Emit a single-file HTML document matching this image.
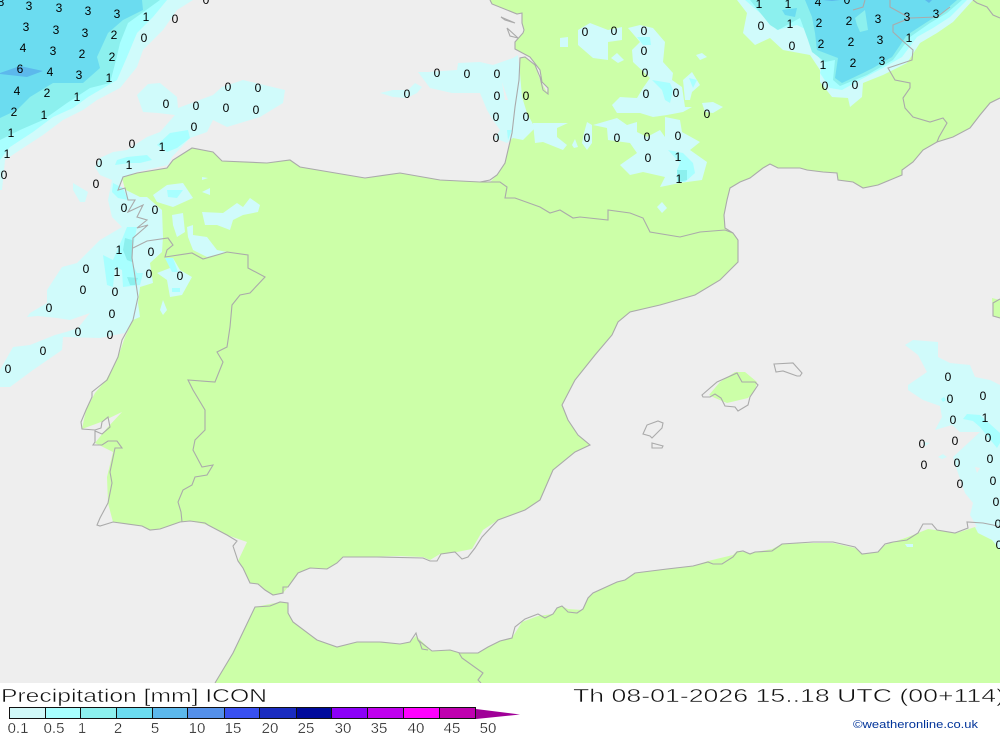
<!DOCTYPE html>
<html><head><meta charset="utf-8"><title>Precipitation ICON</title>
<style>
html,body{margin:0;padding:0;background:#fff;width:1000px;height:733px;overflow:hidden}
svg{display:block}
.l{fill:#ccffa8}
.a{fill:#d0fbfb}.b{fill:#a8ffff}.c{fill:#8cf0ee}.d{fill:#6bdcf0}.e{fill:#5cb8ec}
.o{fill:none;stroke:#aaa;stroke-width:1.1}
.n text{font-family:"Liberation Sans",sans-serif;font-size:12px;fill:#000;text-anchor:middle;dominant-baseline:central}
.t{font-family:"Liberation Sans",sans-serif;fill:#111;stroke:#fff;stroke-width:.45;paint-order:fill stroke}
.s text{font-family:"Liberation Sans",sans-serif;font-size:15px;fill:#222;text-anchor:middle;stroke:#fff;stroke-width:.3}
</style></head><body>
<svg width="1000" height="733" viewBox="0 0 1000 733" xmlns="http://www.w3.org/2000/svg">
<rect width="1000" height="733" fill="#fff"/>
<rect width="1000" height="683" fill="#eeeeee"/>
<!-- land fills -->
<path class="l" d="M490,0L1000,0L1000,98L990,103L980,115L970,128L953,137L937,142L923,150L913,162L902,170L902,175L878,185L863,188L853,182L838,180L837,173L823,172L807,170L800,168L778,168L770,164L763,168L750,178L740,182L730,188L727,200L724,215L725,228L733,233L738,240L738,262L720,280L695,295L660,305L630,312L618,322L612,335L595,355L575,380L562,405L568,420L578,435L590,445L575,452L553,470L540,500L525,510L498,520L483,530L472,549L457,552L440,554L430,560L423,557L400,556L343,557L337,563L327,569L310,568L298,573L288,587L283,593L273,595L265,590L258,584L250,583L243,568L238,561L247,542L227,535L208,525L190,521L180,522L160,529L150,530L142,526L113,522L108,503L107,477L113,452L103,447L95,443L107,428L122,412L101,422L82,429L86,410L95,393L106,380L117,360L125,337L133,320L137,303L135,270L133,248L137,228L147,222L135,217L137,205L128,200L122,178L137,173L167,168L173,160L192,148L213,152L222,161L267,163L290,160L300,167L365,178L400,173L440,180L490,182L497,175L505,163L512,133L515,107L519,80L520,58L525,57L535,65L540,80L547,92L548,88L542,82L540,70L530,57L515,49L515,42L523,33L524,30L522,23L522,13L517,14L492,4Z"/>
<path class="l" d="M215,683L233,653L255,607L280,602L288,603L288,613L293,622L317,640L337,647L357,642L380,642L400,644L410,642L416,636L432,651L450,650L460,653L478,653L488,647L500,641L512,638L522,622L538,616L553,614L557,608L562,606L568,609L582,610L588,598L595,592L617,582L625,580L635,573L667,569L693,566L708,561L733,555L737,551L750,553L772,549L782,544L813,543L833,543L855,548L862,554L878,552L885,545L908,537L928,529L957,533L975,527L1000,535L1000,683Z"/>
<path class="l" d="M709,395L720,382L735,372L745,372L757,382L755,390L748,398L727,403L715,398Z"/>
<path class="l" d="M992,298L1000,300L1000,318L993,316Z"/>
<!-- precipitation: top left -->
<polygon class="a" points="193,0 177,10 163,30 143,50 137,67 120,88 97,100 83,110 63,120 43,135 20,150 5,160 2,190 0,190 0,0"/>
<polygon class="b" points="167,0 153,17 137,33 127,57 117,80 88,97 73,108 53,117 33,132 10,147 0,160 0,0"/>
<polygon class="c" points="160,0 142,13 128,23 120,43 116,60 110,83 90,88 67,103 43,120 20,130 0,140 0,0"/>
<polygon class="d" points="142,0 143,10 123,20 108,33 97,57 100,68 83,83 53,83 30,97 17,110 0,118 0,0"/>
<polygon class="e" points="0,73 20,66 43,71 27,77 0,74"/>
<!-- NW blob -->
<polygon class="a" points="137,95 148,84 160,83 177,97 178,108 213,95 222,87 243,80 285,90 283,103 260,117 227,127 213,120 207,132 190,138 172,157 168,165 137,172 122,178 120,187 140,197 147,197 162,210 163,237 162,252 150,263 153,283 140,287 138,303 140,317 133,320 125,333 100,338 63,337 62,350 33,370 10,387 0,387 0,370 13,347 30,345 55,335 66,332 78,328 90,313 70,320 57,318 38,316 27,317 30,313 47,303 47,290 62,267 77,263 100,240 122,227 112,217 108,200 112,180 100,175 95,167 100,158 113,152 127,150 147,137 160,132 175,115 158,113 143,112"/>
<polygon class="b" points="170,133 188,130 190,138 177,148 167,152 157,145"/>
<polygon class="b" points="127,157 147,155 152,160 140,163 130,163 115,165 117,160"/>
<polygon class="a" points="73,183 88,192 85,202 80,202 73,190"/>
<polygon class="a" points="153,195 167,185 183,183 193,198 173,207 157,202"/>
<polygon class="b" points="167,190 183,190 177,198 168,197"/>
<polygon class="a" points="202,212 223,213 237,203 243,207 250,198 260,205 258,212 243,215 233,220 230,230 217,225 205,225"/>
<polygon class="a" points="172,215 183,213 185,232 177,237 173,225"/>
<polygon class="a" points="187,227 193,225 193,235 207,237 217,250 227,252 207,257 193,250 188,237"/>
<polygon class="a" points="167,258 173,258 180,270 192,277 182,295 170,297 167,280 157,273 170,268"/>
<polygon class="b" points="165,258 173,258 178,272 172,272"/>
<polygon class="b" points="172,288 180,288 180,292 172,292"/>
<polygon class="a" points="163,300 167,310 163,315 160,310"/>
<polygon class="a" points="202,177 208,178 202,180"/>
<polygon class="a" points="202,192 210,188 210,195"/>
<polygon class="b" points="113,183 123,188 128,200 118,198 112,192"/>
<polygon class="b" points="127,227 137,227 133,247 132,263 137,273 143,273 140,285 123,287 122,270 115,267 113,287 107,285 103,255 113,260 123,237"/>
<polygon class="c" points="125,238 132,240 132,262 127,260 123,250"/>
<polygon class="c" points="127,277 138,278 135,285 130,285"/>
<!-- Biscay / France -->
<polygon class="a" points="418,72 428,72 457,70 458,63 480,62 493,65 513,58 518,55 520,73 522,97 527,113 535,128 523,140 513,138 507,143 495,138 500,130 493,120 487,110 480,93 452,93 430,88"/>
<polygon fill="#eeeeee" points="502,82 508,100 505,100"/>
<polygon class="a" points="380,93 393,90 408,90 415,83 422,87 417,93 407,98 393,97"/>
<polygon class="b" points="507,130 512,130 508,140"/>
<polygon class="a" points="578,30 590,23 608,30 622,27 622,40 608,42 608,60 593,58 578,45"/>
<polygon class="a" points="560,38 568,37 568,47 560,47"/>
<polygon class="a" points="611,58 617,53 624,60 618,63"/>
<polygon class="a" points="628,28 640,25 653,28 665,42 663,62 673,73 672,80 682,87 685,107 692,107 683,112 667,115 653,117 640,113 617,113 612,105 620,97 637,98 643,88 650,78 633,62 632,50 640,42"/>
<polygon class="a" points="665,117 680,120 682,132 700,142 690,150 707,162 702,180 680,183 660,187 665,177 643,172 630,175 620,165 637,153 630,143 608,140 607,128 593,125 617,118 627,125 637,122 637,132 647,137 660,130 665,137"/>
<polygon class="a" points="533,123 568,123 557,128 557,137 567,145 563,150 543,142 535,143"/>
<polygon class="a" points="587,122 592,125 592,143 587,150 582,143 584,133"/>
<polygon class="a" points="575,139 578,147 574,148 572,145"/>
<polygon class="a" points="683,80 692,72 700,85 692,92 690,100 685,100"/>
<polygon class="b" points="689,78 697,80 693,88"/>
<polygon class="a" points="702,103 713,102 723,107 713,113 705,112"/>
<polygon class="a" points="696,55 702,53 707,57 700,60"/>
<polygon class="a" points="662,202 667,208 662,213 657,207"/>
<polygon class="b" points="637,37 650,37 651,45 643,45"/>
<polygon class="b" points="652,80 670,83 673,90 670,103 665,100 662,90"/>
<polygon class="b" points="668,150 683,153 693,163 695,173 685,182 677,182 677,170 680,163"/>
<polygon class="c" points="677,170 687,170 687,180 678,182"/>
<!-- top right -->
<polygon class="a" points="737,0 747,13 743,33 755,45 770,38 783,50 810,55 820,70 820,82 832,97 848,98 850,107 862,97 863,83 883,75 907,63 920,43 937,33 953,22 973,0"/>
<polygon class="b" points="745,0 760,13 777,30 797,25 807,30 817,55 823,63 820,73 830,88 842,90 860,80 883,68 902,57 917,37 933,28 950,17 967,0"/>
<polygon class="c" points="750,0 770,25 778,30 800,18 808,40 812,52 825,62 835,60 833,80 840,86 867,75 893,60 910,37 930,23 947,13 962,0"/>
<polygon class="d" points="805,0 812,17 815,33 817,50 838,58 835,78 842,83 863,73 873,68 892,57 907,35 927,22 943,12 957,0"/>
<polygon class="d" points="782,10 797,8 795,17 785,15"/>
<polygon class="c" points="855,18 865,10 868,30 860,32 857,25"/>
<polygon class="e" points="823,0 840,0 832,1"/>
<polygon class="e" points="925,0 932,0 929,3"/>
<!-- right -->
<polygon class="a" points="905,345 913,340 938,342 938,357 950,363 970,365 975,377 990,380 1000,385 1000,527 977,527 970,515 973,503 965,493 958,473 953,457 980,432 967,432 960,432 952,425 935,430 942,417 940,406 923,400 908,390 908,385 927,372 918,355"/>
<polygon fill="#eeeeee" points="975,467 980,468 977,473"/>
<polygon class="a" points="938,457 943,454 947,457 942,459"/>
<polygon class="a" points="923,442 930,443 925,446"/>
<polygon class="a" points="905,544 913,544 913,547 907,547"/>
<polygon class="a" points="975,527 1000,527 1000,550 992,540 978,533"/>
<polygon class="b" points="963,419 967,414 980,415 1000,433 1000,443 997,448 993,443 980,427 973,421"/>
<polygon class="b" points="941,399 944,397 946,400 943,402"/>
<!-- outlines -->
<path class="o" d="M490,0L492,4L517,14L522,13L522,23L524,30L523,33L515,42L515,49L530,57L540,70L542,82L548,88L548,94L543,90L540,77L535,65L525,57L520,58L519,80L515,107L512,133L505,163L497,175L490,180L480,182L440,180L400,173L365,178L300,167L290,160L267,163L222,161L213,152L192,148L173,160L167,168L137,173L123,177L118,190L125,188L128,200L135,200L128,212L143,205L137,217L147,220L137,228L148,225L133,238L132,258L134,270L138,297L133,320L122,340L118,357L107,380L92,392L92,397L86,410L81,422L82,429L95,430L101,428L102,422L108,417L110,427L102,434L95,431L95,442L93,445L102,445L108,441L117,441L122,448L115,448L110,472L112,483L108,503L100,518L97,525L100,526L113,522L142,526L150,530L160,529L180,522L190,521L205,523L208,525L227,535L237,541L233,546L238,561L243,568L250,583L258,584L265,590L273,595L283,593L283,587L288,587L298,573L310,568L327,569L337,563L343,557L377,557L423,558L430,561L437,561L441,554L455,552L462,559L468,557L475,548L482,537L498,520L525,510L540,500L553,470L575,452L590,445L578,435L568,420L562,405L575,380L595,355L612,335L618,322L630,312L660,305L695,295L720,280L738,262L738,240L733,233L725,228L724,215L727,200L730,188L740,182L750,178L763,168L770,164L778,168L800,168L807,170L823,172L837,173L838,180L853,182L863,188L878,185L902,175L902,170L913,162L923,150L937,142L953,137L970,128L980,115L990,103L1000,98"/>
<path class="o" d="M133,248L147,241L168,238L173,245L167,250L165,257L192,253L203,259L217,255L227,252L248,255L248,268L265,277L250,293L240,295L232,305L230,327L227,347L217,352L223,362L215,382L188,380L193,390L205,410L205,430L195,440L193,450L202,467L213,465L207,475L195,477L192,485L183,490L178,502L181,512L182,522"/>
<path class="o" d="M480,182L500,182L507,187L505,198L515,198L540,207L550,213L560,210L573,218L580,217L608,220L608,210L630,213L643,218L650,232L680,237L700,232L725,230L733,233"/>
<path class="o" d="M215,683L233,653L255,607L270,606L280,602L288,603L288,613L293,622L317,640L337,647L357,642L380,642L400,644L410,642L416,633L418,640L432,651L450,650L460,653L478,653L488,647L500,641L512,638L515,627L525,619L538,614L545,618L553,614L557,608L562,606L568,612L577,613L583,609L588,598L593,593L617,582L625,580L635,573L667,569L693,566L708,562L713,564L722,564L733,557L737,552L743,551L750,554L755,552L772,551L782,544L813,542L833,542L855,547L862,554L878,552L885,544L893,542L907,540L918,533L923,524L932,524L937,530L955,533L968,528L967,522L983,523L993,525L1000,527"/>
<path class="o" d="M459,653L462,658L483,673L478,680L481,683"/>
<path class="o" d="M418,640L420,643L422,649L428,650"/>
<path class="o" d="M890,0L890,7L910,18L893,25L893,32L905,43L913,50L912,60L888,68L895,80L910,83L910,88L903,98L905,108L913,117L930,122L943,118L947,123L939,137L937,142"/>
<path class="o" d="M865,0L863,7L853,10"/>
<path class="o" d="M910,18L937,17L950,7"/>
<path class="o" d="M973,0L977,3L987,7L993,15L1000,18"/>
<path class="o" d="M702,395L717,382L737,373L742,382L755,382L758,385L750,397L748,405L738,411L735,407L725,406L721,398L715,394L710,397L703,397Z"/>
<path class="o" d="M774,364L793,363L802,373L800,376L797,376L783,371L776,372Z"/>
<path class="o" d="M643,434L647,425L658,421L663,423L662,428L652,438L650,436Z"/>
<path class="o" d="M652,443L663,446L662,448L652,448Z"/>
<path class="o" d="M1000,299L993,303L993,316L1000,318"/>
<path class="o" d="M501,17L515,23L505,20Z"/>
<path class="o" d="M507,28L518,38L510,36Z"/>
<!-- map labels -->
<g class="n">
<text x="1" y="2">8</text><text x="29" y="6">3</text><text x="59" y="8">3</text><text x="88" y="11">3</text><text x="117" y="14">3</text><text x="146" y="17">1</text><text x="175" y="19">0</text><text x="206" y="0">0</text>
<text x="26" y="27">3</text><text x="56" y="30">3</text><text x="85" y="33">3</text><text x="114" y="35">2</text><text x="144" y="38">0</text>
<text x="23" y="48">4</text><text x="53" y="51">3</text><text x="82" y="54">2</text><text x="112" y="57">2</text>
<text x="20" y="69">6</text><text x="50" y="72">4</text><text x="79" y="75">3</text><text x="109" y="78">1</text>
<text x="17" y="91">4</text><text x="47" y="93">2</text><text x="77" y="97">1</text>
<text x="14" y="112">2</text><text x="44" y="115">1</text><text x="11" y="133">1</text><text x="7" y="154">1</text><text x="4" y="175">0</text>
<text x="228" y="87">0</text><text x="258" y="88">0</text><text x="166" y="104">0</text><text x="196" y="106">0</text><text x="226" y="108">0</text><text x="256" y="110">0</text><text x="194" y="127">0</text><text x="132" y="144">0</text><text x="162" y="147">1</text><text x="99" y="163">0</text><text x="129" y="165">1</text><text x="96" y="184">0</text><text x="124" y="208">0</text><text x="155" y="210">0</text>
<text x="119" y="250">1</text><text x="151" y="252">0</text><text x="86" y="269">0</text><text x="117" y="272">1</text><text x="149" y="274">0</text><text x="180" y="276">0</text><text x="83" y="290">0</text><text x="115" y="292">0</text><text x="49" y="308">0</text><text x="112" y="314">0</text><text x="78" y="332">0</text><text x="110" y="335">0</text><text x="43" y="351">0</text><text x="8" y="369">0</text>
<text x="437" y="73">0</text><text x="467" y="74">0</text><text x="407" y="94">0</text>
<text x="497" y="74">0</text><text x="497" y="96">0</text><text x="526" y="96">0</text><text x="496" y="117">0</text><text x="526" y="117">0</text><text x="496" y="138">0</text>
<text x="585" y="32">0</text><text x="614" y="31">0</text><text x="644" y="31">0</text><text x="644" y="51">0</text><text x="645" y="73">0</text><text x="646" y="94">0</text><text x="676" y="93">0</text><text x="707" y="114">0</text><text x="587" y="138">0</text><text x="617" y="138">0</text><text x="647" y="137">0</text><text x="678" y="136">0</text><text x="648" y="158">0</text><text x="678" y="157">1</text><text x="679" y="179">1</text>
<text x="759" y="4">1</text><text x="788" y="4">1</text><text x="818" y="2">4</text><text x="847" y="0">0</text><text x="761" y="26">0</text><text x="790" y="24">1</text><text x="819" y="23">2</text><text x="849" y="21">2</text><text x="878" y="19">3</text><text x="907" y="17">3</text><text x="936" y="14">3</text><text x="792" y="46">0</text><text x="821" y="44">2</text><text x="851" y="42">2</text><text x="880" y="40">3</text><text x="909" y="38">1</text><text x="823" y="65">1</text><text x="853" y="63">2</text><text x="882" y="61">3</text><text x="825" y="86">0</text><text x="855" y="85">0</text>
<text x="948" y="377">0</text><text x="950" y="399">0</text><text x="983" y="396">0</text><text x="953" y="420">0</text><text x="985" y="418">1</text><text x="955" y="441">0</text><text x="988" y="438">0</text><text x="922" y="444">0</text><text x="924" y="465">0</text><text x="957" y="463">0</text><text x="990" y="459">0</text><text x="960" y="484">0</text><text x="993" y="481">0</text><text x="996" y="502">0</text><text x="998" y="524">0</text><text x="999" y="545">0</text>
</g>
<!-- footer -->
<rect y="683" width="1000" height="50" fill="#fff"/>
<text class="t" x="1" y="702" font-size="18.5" textLength="266" lengthAdjust="spacingAndGlyphs">Precipitation [mm] ICON</text>
<text class="t" x="573" y="702" font-size="18.5" textLength="432" lengthAdjust="spacingAndGlyphs">Th 08-01-2026 15..18 UTC (00+114)</text>
<g shape-rendering="crispEdges" stroke="#111" stroke-width="1">
<rect x="9.5" y="707.5" width="36" height="11" fill="#d0f8f8"/>
<rect x="45.5" y="707.5" width="35" height="11" fill="#a8ffff"/>
<rect x="80.5" y="707.5" width="36" height="11" fill="#8cf0ee"/>
<rect x="116.5" y="707.5" width="36" height="11" fill="#6bdcf0"/>
<rect x="152.5" y="707.5" width="35" height="11" fill="#5cb8ec"/>
<rect x="187.5" y="707.5" width="37" height="11" fill="#5490ea"/>
<rect x="224.5" y="707.5" width="35" height="11" fill="#3850f0"/>
<rect x="259.5" y="707.5" width="37" height="11" fill="#1a2cc0"/>
<rect x="296.5" y="707.5" width="35" height="11" fill="#000a9c"/>
<rect x="331.5" y="707.5" width="36" height="11" fill="#8c00f8"/>
<rect x="367.5" y="707.5" width="36" height="11" fill="#c000ee"/>
<rect x="403.5" y="707.5" width="36" height="11" fill="#ff00ff"/>
<rect x="439.5" y="707.5" width="36" height="11" fill="#c000b0"/>
</g>
<polygon points="476,709 520,714.5 476,719" fill="#a00098"/>
<g class="s">
<text x="18" y="733">0.1</text><text x="54" y="733">0.5</text><text x="82" y="733">1</text><text x="118" y="733">2</text><text x="155" y="733">5</text><text x="197" y="733">10</text><text x="233" y="733">15</text><text x="270" y="733">20</text><text x="306" y="733">25</text><text x="343" y="733">30</text><text x="379" y="733">35</text><text x="416" y="733">40</text><text x="452" y="733">45</text><text x="488" y="733">50</text>
</g>
<text x="853" y="728" font-family="'Liberation Sans',sans-serif" font-size="11" fill="#003399" textLength="125" lengthAdjust="spacingAndGlyphs">©weatheronline.co.uk</text>
</svg>
</body></html>
